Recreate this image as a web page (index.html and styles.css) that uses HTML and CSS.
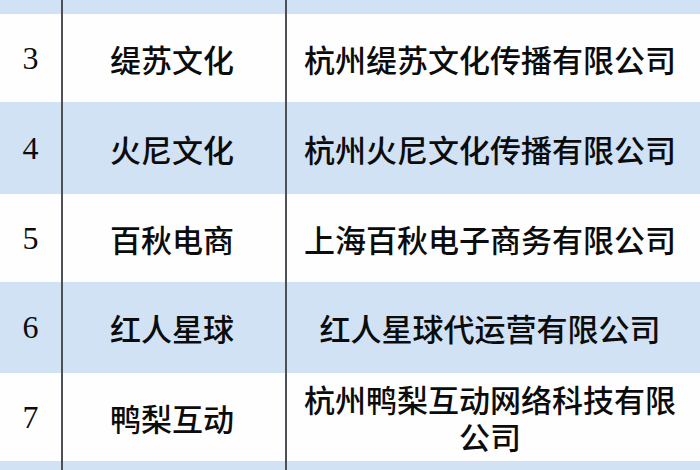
FILE: index.html
```html
<!DOCTYPE html>
<html lang="zh-CN">
<head>
<meta charset="utf-8">
<title>公司列表</title>
<link rel="stylesheet" href="styles.css">
</head>
<body>
<div class="table">
  <div class="row blue"><div class="cell num"></div><div class="cell short"></div><div class="cell full"></div></div>
  <div class="row"><div class="cell num">3</div><div class="cell short">缇苏文化</div><div class="cell full">杭州缇苏文化传播有限公司</div></div>
  <div class="row blue"><div class="cell num">4</div><div class="cell short">火尼文化</div><div class="cell full">杭州火尼文化传播有限公司</div></div>
  <div class="row"><div class="cell num">5</div><div class="cell short">百秋电商</div><div class="cell full">上海百秋电子商务有限公司</div></div>
  <div class="row blue"><div class="cell num">6</div><div class="cell short">红人星球</div><div class="cell full">红人星球代运营有限公司</div></div>
  <div class="row"><div class="cell num">7</div><div class="cell short">鸭梨互动</div><div class="cell full">杭州鸭梨互动网络科技有限公司</div></div>
  <div class="row blue"><div class="cell num"></div><div class="cell short"></div><div class="cell full"></div></div>
</div>
</body>
</html>
```
FILE: styles.css
```css
html, body {
  margin: 0;
  padding: 0;
  background: #ffffff;
}
body {
  width: 700px;
  height: 470px;
  overflow: hidden;
  font-family: "Noto Sans CJK SC", "Noto Sans", sans-serif;
  color: #0c0c0c;
}
.table {
  display: flex;
  flex-direction: column;
}
.row {
  display: grid;
  grid-template-columns: 61px 224px 415px;
  height: 88px;
  background: #fefefe;
  overflow: hidden;
}
.row.blue {
  background: #d1e2f5;
}
.row:nth-child(1) { height: 14px; }
.row:nth-child(3) { height: 92px; }
.row:nth-child(5) { height: 91px; }
.row:nth-child(7) { height: 9px; }
.cell {
  display: flex;
  align-items: center;
  justify-content: center;
  text-align: center;
  font-size: 31px;
  font-weight: 500;
  line-height: 37px;
}
.num {
  font-family: "Liberation Serif", "Times New Roman", serif;
  font-weight: 400;
  font-size: 32px;
}
.short {
  border-left: 2px solid #4d5054;
  padding-right: 4px;
}
.full {
  border-left: 2px solid #4d5054;
  padding: 0 17px 0 10px;
}
```
